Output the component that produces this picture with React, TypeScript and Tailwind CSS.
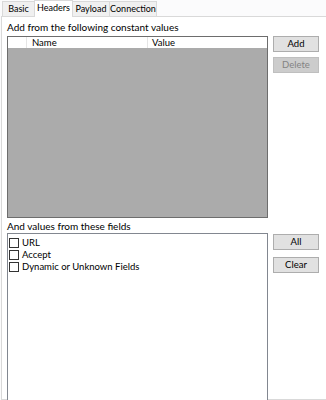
import React from "react";

const font = { fontFamily: 'Lato, "Noto Sans", sans-serif' };

const Tab: React.FC<{ label: string; w: string; active?: boolean }> = ({ label, w, active }) =>
  active ? (
    <div className={`relative z-10 -mb-px h-[17px] whitespace-nowrap border border-b-0 border-[#d9d9d9] bg-white text-center text-[9px] leading-[14px] text-black ${w}`}>
      {label}
    </div>
  ) : (
    <div className={`-ml-px mt-[2px] h-[15px] whitespace-nowrap border border-b-0 border-[#d9d9d9] bg-[#f0f0f0] text-center text-[9px] leading-[14px] text-black ${w}`}>
      {label}
    </div>
  );

const Button: React.FC<{ label: string; disabled?: boolean }> = ({ label, disabled }) => (
  <div
    className={
      disabled
        ? "flex h-[16px] w-[46px] items-center justify-center border border-[#bfbfbf] bg-[#cccccc] text-[9.5px] text-[#838383]"
        : "flex h-[16px] w-[46px] items-center justify-center border border-[#adadad] bg-[#e1e1e1] text-[9.5px] text-black"
    }
  >
    {label}
  </div>
);

const Check: React.FC<{ label: string }> = ({ label }) => (
  <div className="flex h-[12px] items-center gap-[3px]">
    <div className="h-[10px] w-[10px] border border-[#333333] bg-white" />
    <span className="text-[9.5px] leading-[12px] text-black">{label}</span>
  </div>
);

export default function App() {
  return (
    <div className="h-[400px] w-[326px] overflow-hidden bg-[#fbfbfc]" style={font}>
      <div className="flex h-[16px] items-end pl-[3px]">
        <Tab label="Basic" w="w-[33px]" />
        <Tab label="Headers" w="w-[39px] -ml-px" active />
        <Tab label="Payload" w="w-[38px]" />
        <Tab label="Connection" w="w-[48px]" />
      </div>
      <div className="ml-[1px] h-[384px] border border-r-0 border-[#d9d9d9] bg-white pl-[5px]">
        <div className="pt-[3px] text-[10px] leading-[14px] text-black">Add from the following constant values</div>
        <div className="mt-[2px] flex gap-[5px]">
          <div className="h-[182px] w-[261px] border border-[#6d6d6d] bg-[#ababab]">
            <div className="flex h-[11px] bg-white text-[9.5px] leading-[11px] text-black">
              <div className="w-[19px] border-r border-[#e5e5e5]" />
              <div className="w-[121px] border-r border-[#e5e5e5] pl-[5px]">Name</div>
              <div className="flex-1 pl-[4px]">Value</div>
            </div>
          </div>
          <div className="flex flex-col gap-[5px]">
            <Button label="Add" />
            <Button label="Delete" disabled />
          </div>
        </div>
        <div className="pt-[1px] text-[10px] leading-[14px] text-black">And values from these fields</div>
        <div className="flex gap-[5px]">
          <div className="h-[200px] w-[261px] border border-[#828790] bg-white pl-[1px] pt-[3px]">
            <Check label="URL" />
            <Check label="Accept" />
            <Check label="Dynamic or Unknown Fields" />
          </div>
          <div className="flex flex-col gap-[7px] pt-[1px]">
            <Button label="All" />
            <Button label="Clear" />
          </div>
        </div>
      </div>
    </div>
  );
}
